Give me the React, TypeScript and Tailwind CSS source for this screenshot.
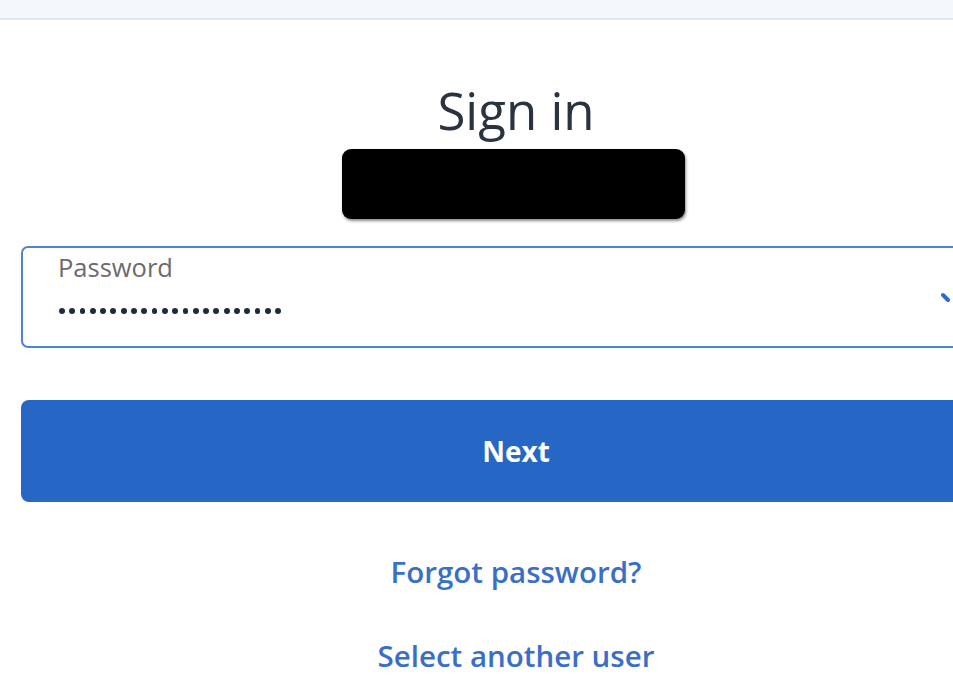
import React from "react";

export default function App() {
  const font = { fontFamily: '"Open Sans", "Noto Sans", sans-serif' };
  return (
    <div className="w-[953px] h-[683px] overflow-hidden bg-white" style={font}>
      <div className="h-[20px] bg-[#f4f7fc] border-b-2 border-[#dfe7f4]" />
      <div className="ml-[21px] w-[990px] flex flex-col items-center">
        <h1 className="mt-[60px] text-[51px] leading-[60px] text-[#2a3340] font-normal">Sign in</h1>
        <div className="mt-[9px] w-[343px] h-[70px] bg-black rounded-[9px] shadow-[1px_2px_3px_rgba(0,0,0,0.45)] ml-[-6px]" />
        <div className="mt-[27px] w-full h-[102px] border-2 border-[#4f83d9] rounded-[7px] relative">
          <div className="absolute left-[35px] top-[3px] text-[25.5px] leading-[32px] text-[#6b6b6b]">Password</div>
          <div className="absolute left-[36px] top-[60px] flex gap-[4.5px]">
            {Array.from({ length: 22 }).map((_, i) => (
              <span key={i} className="w-[5.8px] h-[5.8px] rounded-full bg-[#1f2a3c]" />
            ))}
          </div>
          <svg className="absolute left-[918px] top-[44px]" width="20" height="14" viewBox="0 0 20 14">
            <path d="M2 3 L7 8" stroke="#2e6bd0" strokeWidth="4" strokeLinecap="round" fill="none" />
          </svg>
        </div>
        <button className="mt-[52px] w-full h-[102px] bg-[#2667c5] rounded-[8px] text-white text-[28px] font-bold">
          Next
        </button>
        <a className="mt-[50px] text-[29.5px] font-semibold text-[#3a6fc8] leading-[40px]">Forgot password?</a>
        <a className="mt-[44px] text-[29.5px] font-semibold text-[#3a6fc8] leading-[40px]">Select another user</a>
      </div>
    </div>
  );
}
